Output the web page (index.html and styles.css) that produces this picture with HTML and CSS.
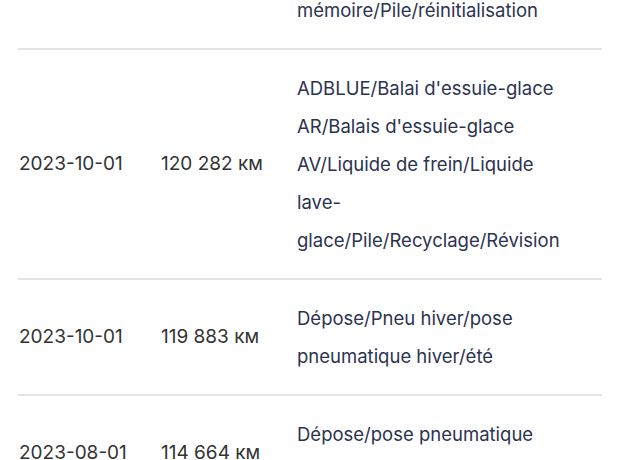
FILE: index.html
```html
<!DOCTYPE html>
<html lang="fr">
<head>
<meta charset="utf-8">
<link rel="stylesheet" href="styles.css">
</head>
<body>
<div class="list">
  <div class="row first">
    <div class="date">2023-11-15</div>
    <div class="km">121 040 км</div>
    <div class="desc">Contrôle/Diagnostic/Remise à zéro/Effacement de la mémoire/Pile/réinitialisation</div>
  </div>
  <div class="row">
    <div class="date">2023-10-01</div>
    <div class="km">120 282 км</div>
    <div class="desc">ADBLUE/Balai d'essuie-glace AR/Balais d'essuie-glace AV/Liquide de frein/Liquide lave-glace/Pile/Recyclage/Révision</div>
  </div>
  <div class="row">
    <div class="date">2023-10-01</div>
    <div class="km">119 883 км</div>
    <div class="desc">Dépose/Pneu hiver/pose pneumatique hiver/été</div>
  </div>
  <div class="row">
    <div class="date">2023-08-01</div>
    <div class="km">114 664 км</div>
    <div class="desc">Dépose/pose pneumatique été/hiver/Équilibrage</div>
  </div>
</div>
</body>
</html>
```
FILE: styles.css
```css
html, body {
  margin: 0;
  padding: 0;
  background: #ffffff;
  height: 460px;
  overflow: hidden;
}
body {
  font-family: Inter, "Noto Sans", sans-serif;
  font-size: 18.5px;
  color: #333333;
}
.list {
  margin: 0 18px;
  transform: translateY(-104px);
}
.row {
  display: grid;
  grid-template-columns: 142px 137px 275px;
  align-items: center;
  padding: 19px 0 19px;
  border-top: 2px solid #e4e4e4;
}
.row.first {
  border-top: none;
}
.date, .km {
  font-size: 19px;
  line-height: 38px;
  color: #333333;
  padding-left: 1px;
}
.desc {
  line-height: 38px;
  color: #2c3350;
}
```
